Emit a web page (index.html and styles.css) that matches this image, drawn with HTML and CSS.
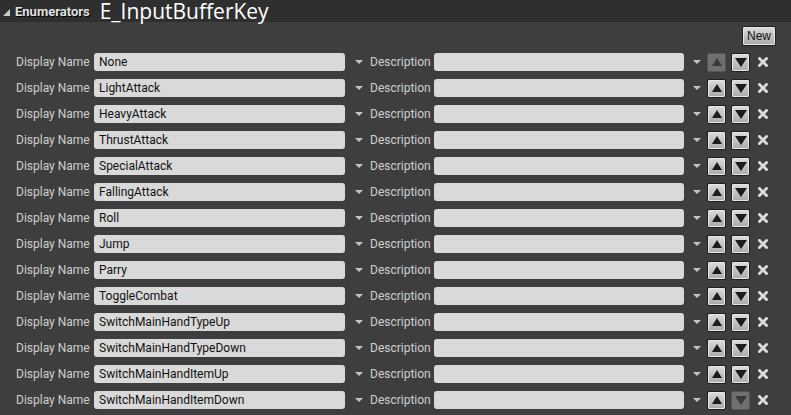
FILE: index.html
```html
<!DOCTYPE html>
<html>
<head>
<meta charset="utf-8">
<link rel="stylesheet" href="styles.css">
</head>
<body>
<div class="header">
  <span class="caret"></span>
  <span class="section">Enumerators</span>
  <span class="title">E_InputBufferKey</span>
</div>
<div class="toolbar"><button class="btn new">New</button></div>
<div class="rows" id="rows"></div>
<script src="app.js"></script>
</body>
</html>
```
FILE: app.js
```js
var names = ["None","LightAttack","HeavyAttack","ThrustAttack","SpecialAttack","FallingAttack","Roll","Jump","Parry","ToggleCombat","SwitchMainHandTypeUp","SwitchMainHandTypeDown","SwitchMainHandItemUp","SwitchMainHandItemDown"];
var up = '<svg width="10" height="8" viewBox="0 0 10 8"><path d="M5 0L10 8H0Z"/></svg>';
var down = '<svg width="12" height="9" viewBox="0 0 12 9"><path d="M0 0H12L6 9Z"/></svg>';
var x = '<svg width="10" height="10" viewBox="0 0 10 10"><path d="M1.5 1.5L8.5 8.5M8.5 1.5L1.5 8.5" stroke="#dcdcdc" stroke-width="2.8" stroke-linecap="square"/></svg>';
var html = "";
names.forEach(function (n, i) {
  html += '<div class="row">' +
    '<span class="label name-label">Display Name</span>' +
    '<span class="field name-field">' + n + '</span>' +
    '<span class="drop first"></span>' +
    '<span class="label desc-label">Description</span>' +
    '<span class="field desc-field"></span>' +
    '<span class="drop"></span>' +
    '<span class="btn sq up' + (i === 0 ? ' disabled' : '') + '">' + up + '</span>' +
    '<span class="btn sq down' + (i === names.length - 1 ? ' disabled' : '') + '">' + down + '</span>' +
    '<span class="del">' + x + '</span>' +
    '</div>';
});
document.getElementById("rows").innerHTML = html;
```
FILE: styles.css
```css
html, body {
  margin: 0;
  padding: 0;
  background: #3e3e3e;
  width: 791px;
  height: 415px;
  overflow: hidden;
  font-family: Roboto, "Liberation Sans", sans-serif;
}
.header {
  height: 22px;
  background: #2f2f2f;
  display: flex;
  align-items: center;
}
.caret {
  width: 0;
  height: 0;
  border-left: 7px solid transparent;
  border-bottom: 7px solid #c8c8c8;
  margin-left: 3px;
  margin-top: 2px;
}
.section {
  color: #e0e0e0;
  font-weight: bold;
  font-size: 13px;
  margin-left: 5px;
  text-shadow: 1px 1px 0 #000;
}
.title {
  color: #fff;
  font-size: 21px;
  margin-left: 10px;
  font-family: "Open Sans", Roboto, sans-serif;
  line-height: 22px;
}
.toolbar {
  height: 27px;
  display: flex;
  justify-content: flex-end;
  align-items: center;
  padding-right: 15px;
}
.btn {
  background: linear-gradient(#dcdcdc, #a9a9a9);
  border: 1px solid #1e1e1e;
  border-radius: 2px;
  box-shadow: inset 0 0 0 1px #e8e8e8;
  box-sizing: border-box;
}
.new {
  height: 20px;
  width: 34px;
  padding: 0;
  font-family: "Liberation Sans", sans-serif;
  font-size: 12px;
  color: #111;
  margin-top: 1px;
}
.rows {
  display: flex;
  flex-direction: column;
}
.row {
  height: 26px;
  display: flex;
  align-items: center;
  padding-left: 16px;
}
.label {
  color: #cfcfcf;
  font-size: 12px;
}
.name-label { width: 78px; }
.desc-label { width: 64px; }
.field {
  height: 18px;
  background: #d9d9d9;
  border-radius: 3px;
  color: #111;
  font-size: 12px;
  line-height: 18px;
  padding-left: 5px;
  box-sizing: border-box;
}
.name-field { width: 251px; }
.desc-field { width: 250px; }
.drop {
  width: 23px;
  height: 18px;
  display: flex;
  align-items: center;
  justify-content: center;
}
.drop.first { width: 25px; }
.drop::after {
  content: "";
  border-left: 4px solid transparent;
  border-right: 4px solid transparent;
  border-top: 4px solid #c4c4c4;
  margin-left: 2px;
}
.sq {
  width: 19px;
  height: 19px;
  display: flex;
  align-items: center;
  justify-content: center;
  fill: #1c1c1c;
}
.up { margin-right: 5px; }
.sq.disabled {
  background: #6f6f6f;
  box-shadow: none;
  border-color: #555;
  fill: #3a3a3a;
}
.del {
  margin-left: 8px;
  width: 10px;
  height: 10px;
  display: flex;
}
```
